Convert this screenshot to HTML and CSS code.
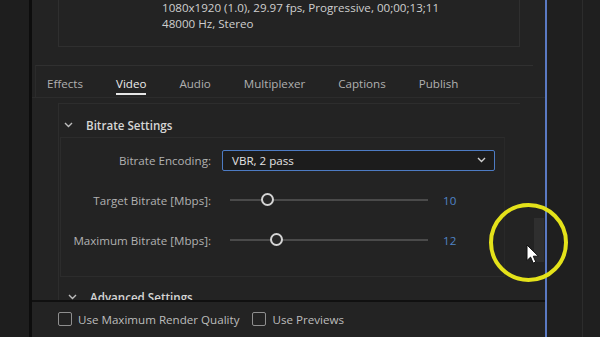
FILE: index.html
```html
<!DOCTYPE html>
<html lang="en">
<head>
  <meta charset="UTF-8" />
  <title>Export Settings</title>
  <link rel="stylesheet" href="styles.css">
</head>
<body>
  <div class="app">
    <div class="left-strip"></div>

    <div class="main">
      <div class="source-info">
        <div class="info-box">
          <p>1080x1920 (1.0), 29.97 fps, Progressive, 00;00;13;11</p>
          <p>48000 Hz, Stereo</p>
        </div>
      </div>

      <div class="tabs">
        <span class="tab">Effects</span>
        <span class="tab active">Video</span>
        <span class="tab">Audio</span>
        <span class="tab">Multiplexer</span>
        <span class="tab">Captions</span>
        <span class="tab">Publish</span>
      </div>

      <div class="settings">
        <div class="settings-panel">
          <div class="section-head">
            <svg class="chevron" width="9" height="6" viewBox="0 0 9 6"><path d="M1 1l3.5 3.5L8 1" fill="none" stroke="#bdbdbd" stroke-width="1.4"/></svg>
            <span>Bitrate Settings</span>
          </div>

          <div class="group">
            <div class="row">
              <label class="row-label">Bitrate Encoding:</label>
              <div class="dropdown">
                <span>VBR, 2 pass</span>
                <svg width="9" height="6" viewBox="0 0 9 6"><path d="M1 1l3.5 3.5L8 1" fill="none" stroke="#d0d0d0" stroke-width="1.4"/></svg>
              </div>
            </div>
            <div class="row">
              <label class="row-label">Target Bitrate [Mbps]:</label>
              <div class="slider">
                <div class="track"></div>
                <div class="thumb" style="left: 19%"></div>
              </div>
              <span class="value">10</span>
            </div>
            <div class="row">
              <label class="row-label">Maximum Bitrate [Mbps]:</label>
              <div class="slider">
                <div class="track"></div>
                <div class="thumb" style="left: 23.5%"></div>
              </div>
              <span class="value">12</span>
            </div>
          </div>

          <div class="section-head advanced">
            <svg class="chevron" width="9" height="6" viewBox="0 0 9 6"><path d="M1 1l3.5 3.5L8 1" fill="none" stroke="#bdbdbd" stroke-width="1.4"/></svg>
            <span>Advanced Settings</span>
          </div>
        </div>
      </div>

      <div class="footer-bar">
        <label class="check"><span class="box"></span>Use Maximum Render Quality</label>
        <label class="check"><span class="box"></span>Use Previews</label>
      </div>

      <div class="scroll-thumb"></div>
    </div>

    <div class="blue-line"></div>

    <div class="right-strip">
      <div class="right-inner"></div>
    </div>
  </div>

  <div class="highlight"></div>
  <svg class="pointer" width="15" height="21" viewBox="0 0 15 21">
    <path d="M1 1v15.5l3.6-3.4 2.6 6 2.6-1.1-2.5-5.8h5.1z" fill="#ffffff" stroke="#111" stroke-width="1"/>
  </svg>
</body>
</html>
```

FILE: styles.css
```css
body {
  margin: 0;
  width: 600px;
  height: 337px;
  overflow: hidden;
  background-color: #1e1e1e;
  font-family: 'Open Sans', sans-serif;
  font-size: 11.6px;
  color: #c4c4c4;
}

.app {
  display: flex;
  height: 337px;
}

.left-strip {
  width: 29px;
  background-color: #1e1e1e;
  border-right: 3px solid #0d0d0d;
}

.main {
  position: relative;
  width: 513px;
  background-color: #232323;
  display: flex;
  flex-direction: column;
}

/* source info */
.source-info {
  height: 65px;
  padding-left: 26px;
}

.info-box {
  width: 460px;
  height: 46px;
  border: 1px solid #2f2f2f;
  border-top: none;
}

.info-box p {
  margin: 0;
  padding-left: 103px;
  line-height: 16px;
  color: #cfcfcf;
}

/* tabs */
.tabs {
  display: flex;
  gap: 33px;
  height: 31px;
  margin: 0 12px 0 3px;
  padding-left: 11px;
  border-top: 1px solid #303030;
  border-left: 1px solid #2b2b2b;
}

.tab {
  padding-top: 10px;
  padding-bottom: 1px;
  line-height: 16px;
  height: 16px;
  border-bottom: 2px solid transparent;
  color: #b0b0b0;
}

.tab.active {
  color: #ececec;
  border-bottom-color: #e6e6e6;
}

/* settings */
.settings {
  height: 202px;
  overflow: hidden;
  border-top: 1px solid #2c2c2c;
}

.settings-panel {
  margin: 5px 25px 0 26px;
  border-left: 1px solid #2d2d2d;
  border-top: 1px solid #2d2d2d;
}

.section-head {
  display: flex;
  align-items: center;
  gap: 13px;
  height: 24px;
  margin-top: 9px;
  padding-left: 5px;
  font-weight: 600;
  color: #d6d6d6;
}

.section-head.advanced {
  margin-top: 8px;
  padding-left: 9px;
}

.group {
  margin-left: 1px;
  width: 443px;
  padding: 11px 0 25px;
  border: 1px solid #2c2c2c;
  border-right-color: #292929;
  display: flex;
  flex-direction: column;
  gap: 18px;
}

.row {
  display: flex;
  align-items: center;
  height: 22px;
}

.row-label {
  width: 150px;
  text-align: right;
  color: #b1b1b1;
}

.dropdown {
  margin-left: 11px;
  width: 254px;
  height: 19px;
  padding: 0 8px 0 9px;
  display: flex;
  align-items: center;
  justify-content: space-between;
  background-color: #1c1c1c;
  border: 1.5px solid #4d7bc3;
  border-radius: 2px;
  color: #e2e2e2;
}

.slider {
  position: relative;
  margin-left: 19px;
  width: 198px;
  height: 14px;
}

.track {
  position: absolute;
  left: 0;
  right: 0;
  top: 6px;
  height: 2px;
  background-color: #4a4a4a;
}

.thumb {
  position: absolute;
  top: 0;
  width: 9px;
  height: 9px;
  margin-left: -7px;
  border: 2.5px solid #d4d4d4;
  border-radius: 50%;
  background-color: #262626;
}

.value {
  margin-left: 15px;
  color: #5083c6;
}

/* bottom bar */
.footer-bar {
  flex: 1;
  display: flex;
  align-items: center;
  gap: 13px;
  padding-left: 26px;
  padding-bottom: 1px;
  border-top: 2px solid #101010;
}

.check {
  display: flex;
  align-items: center;
  gap: 6px;
  color: #bdbdbd;
}

.box {
  width: 12px;
  height: 12px;
  border: 1.5px solid #8f8f8f;
  border-radius: 2px;
}

.scroll-thumb {
  position: absolute;
  left: 502px;
  top: 218px;
  width: 10px;
  height: 44px;
  background-color: #2f2f2f;
}

/* right side */
.blue-line {
  width: 2px;
  background-color: #5a79c2;
}

.right-strip {
  flex: 1;
  background-color: #1f1f1f;
  padding-left: 35px;
}

.right-inner {
  height: 100%;
  border-left: 1px solid #2c2c2c;
}

/* overlay */
.highlight {
  position: absolute;
  left: 489px;
  top: 203px;
  width: 71px;
  height: 71px;
  border: 4px solid #e4e21a;
  border-radius: 50%;
}

.pointer {
  position: absolute;
  left: 526px;
  top: 244px;
}
```
